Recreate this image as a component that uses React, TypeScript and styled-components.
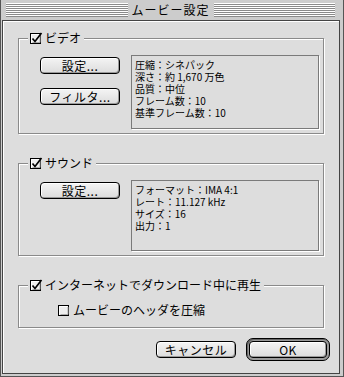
import React from 'react';
import styled, { createGlobalStyle } from 'styled-components';

const Global = createGlobalStyle`
  html, body { margin: 0; padding: 0; background: #dddddd; }
  body { font-family: "Noto Sans CJK JP", "Noto Sans", sans-serif; color: #000; }
  * { box-sizing: border-box; }
`;

const Window = styled.div`
  width: 344px;
  height: 377px;
  display: flex;
  flex-direction: column;
  background: #cccccc;
  border: 1px solid #555;
  border-top: none;
  padding: 0 3px 2px 1px;
`;

const TitleBar = styled.div`
  height: 20px;
  flex: none;
  display: flex;
  align-items: center;
  padding: 0 5px 0 4px;
`;

const Stripes = styled.div`
  flex: 1;
  height: 14px;
  background: repeating-linear-gradient(to bottom, #ffffff 0 1px, #8a8a8a 1px 2px);
`;

const Title = styled.div`
  padding: 0 4px;
  font-size: 12px;
  line-height: 14px;
  letter-spacing: 1px;
`;

const Content = styled.div`
  flex: 1;
  display: flex;
  flex-direction: column;
  background: #dddddd;
  border: 1px solid #444;
  box-shadow: inset 1px 1px 0 #fff;
  padding: 17px 0 0 0;
`;

const Group = styled.div<{ $h: number; $gap?: number }>`
  position: relative;
  height: ${p => p.$h}px;
  margin: 0 15px ${p => p.$gap ?? 0}px 15px;
  border: 1px solid #8a8a8a;
  box-shadow: 1px 1px 0 #fff, inset 1px 1px 0 #fff;
  padding: 16px 4px 4px 21px;
  display: flex;
  align-items: flex-start;
  gap: 11px;
`;

const Legend = styled.label`
  position: absolute;
  top: -8px;
  left: 9px;
  height: 14px;
  display: flex;
  align-items: center;
  gap: 2px;
  padding: 0 3px 0 2px;
  background: #dddddd;
  font-size: 12px;
  line-height: 14px;
  white-space: nowrap;
`;

const ButtonCol = styled.div`
  width: 80px;
  margin-top: 2px;
  display: flex;
  flex-direction: column;
  gap: 14px;
`;

const Btn = styled.button<{ $w?: number }>`
  width: ${p => p.$w ?? 80}px;
  height: 17px;
  padding: 0;
  border: 1px solid #000;
  border-radius: 4px;
  background: linear-gradient(#f4f4f4, #dcdcdc);
  box-shadow: inset 1px 1px 0 #fff, inset -1px -1px 0 #9a9a9a;
  font-family: "Noto Sans CJK JP", "Noto Sans", sans-serif;
  font-size: 12px;
  line-height: 15px;
  color: #000;
  letter-spacing: 0.5px;
`;

const DefaultRing = styled.div`
  padding: 2px;
  border: 1px solid #000;
  border-radius: 7px;
  background: #9a9a9a;
  box-shadow: inset 1px 1px 0 #666;
  display: flex;
`;

const InfoBox = styled.div<{ $h: number }>`
  flex: 1;
  height: ${p => p.$h}px;
  border: 1px solid #7a7a7a;
  box-shadow: 1px 1px 0 #fff;
  padding: 3px 3px;
  font-size: 10px;
  line-height: 12px;
  white-space: nowrap;
`;

const InnerRow = styled.label`
  display: flex;
  align-items: center;
  gap: 2px;
  height: 16px;
  margin-left: 18px;
  font-size: 12px;
  line-height: 14px;
  white-space: nowrap;
`;

const ButtonRow = styled.div`
  display: flex;
  justify-content: flex-end;
  align-items: center;
  gap: 10px;
  margin-top: 10px;
  padding-right: 9px;
`;

const Check: React.FC<{ checked?: boolean }> = ({ checked }) => (
  <svg width="13" height="13" viewBox="0 0 13 13" style={{ flex: 'none' }}>
    <rect x="0.5" y="1.5" width="10" height="10" fill="#eeeeee" stroke="#000" />
    <path d="M1.5 11 V2.5 H9.5" fill="none" stroke="#fff" />
    <path d="M2.5 10.5 H10 V3" fill="none" stroke="#aaa" />
    {checked && (
      <path d="M2.5 6.5 L5 9.5 L11.5 1" fill="none" stroke="#000" strokeWidth="1.7" />
    )}
  </svg>
);

export default function App() {
  return (
    <>
      <Global />
      <Window>
        <TitleBar>
          <Stripes />
          <Title>ムービー設定</Title>
          <Stripes />
        </TitleBar>
        <Content>
          <Group $h={96} $gap={29}>
            <Legend><Check checked />ビデオ</Legend>
            <ButtonCol>
              <Btn>設定...</Btn>
              <Btn>フィルタ...</Btn>
            </ButtonCol>
            <InfoBox $h={74}>
              <div>圧縮：シネパック</div>
              <div>深さ：約 1,670 万色</div>
              <div>品質：中位</div>
              <div>フレーム数：10</div>
              <div>基準フレーム数：10</div>
            </InfoBox>
          </Group>
          <Group $h={93} $gap={29}>
            <Legend><Check checked />サウンド</Legend>
            <ButtonCol>
              <Btn>設定...</Btn>
            </ButtonCol>
            <InfoBox $h={71}>
              <div>フォーマット：IMA 4:1</div>
              <div>レート：11.127 kHz</div>
              <div>サイズ：16</div>
              <div>出力：1</div>
            </InfoBox>
          </Group>
          <Group $h={43}>
            <Legend><Check checked />インターネットでダウンロード中に再生</Legend>
            <InnerRow><Check />ムービーのヘッダを圧縮</InnerRow>
          </Group>
          <ButtonRow>
            <Btn>キャンセル</Btn>
            <DefaultRing>
              <Btn $w={78}>OK</Btn>
            </DefaultRing>
          </ButtonRow>
        </Content>
      </Window>
    </>
  );
}
